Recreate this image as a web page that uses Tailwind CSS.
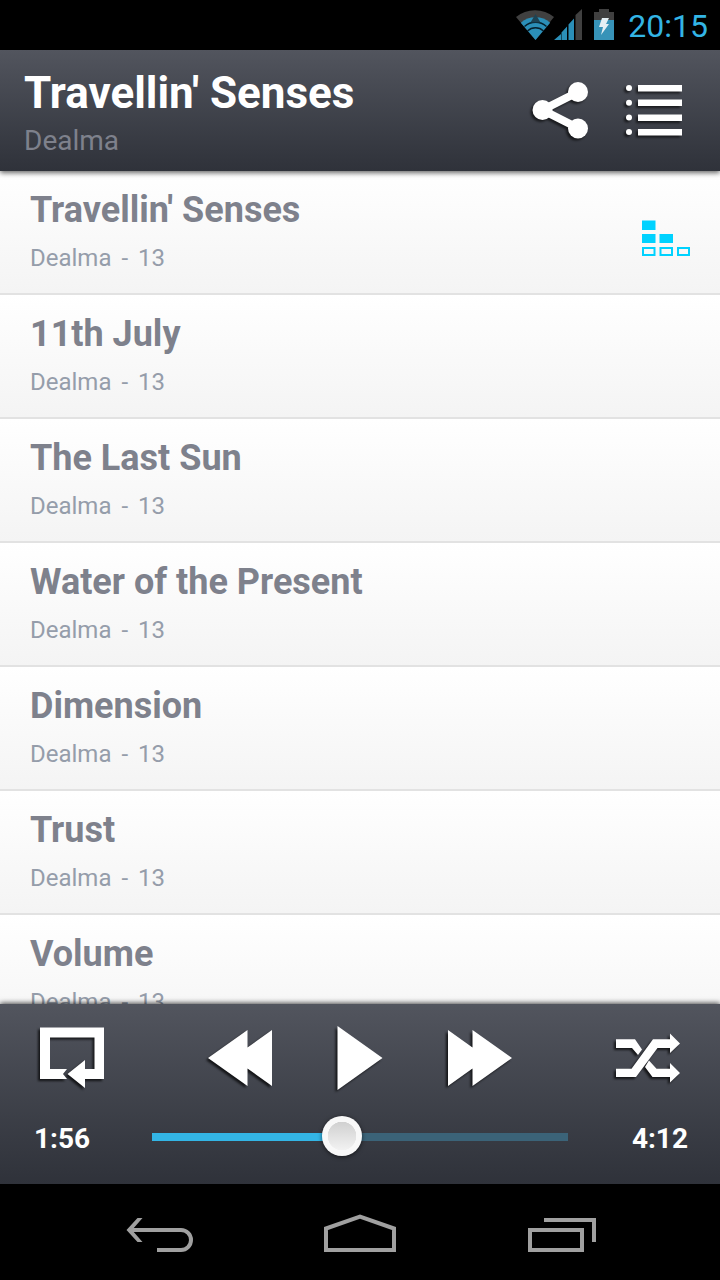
<!DOCTYPE html>
<html lang="en">
<head>
    <meta charset="UTF-8">
    <meta name="viewport" content="width=device-width, initial-scale=1.0">
    <title>Travellin' Senses - Dealma</title>
    <script src="https://cdn.jsdelivr.net/npm/@tailwindcss/browser@4"></script>
</head>
<body class="flex h-screen flex-col overflow-hidden bg-black font-[Roboto,sans-serif]">

    <!-- Status bar -->
    <div class="flex h-[50px] shrink-0 items-center justify-end pr-3 text-[#33b5e5]">
        <svg class="h-8 w-10" viewBox="0 0 40 32" fill="none" aria-label="Wi-Fi">
            <path d="M2 8A30 30 0 0 1 40 8L21.500 31Z" fill="#404040"/>
            <path d="M6.800 13.700A22.700 22.700 0 0 1 36.200 13.700L21.500 31Z" fill="#2b8fb8"/>
            <path d="M10.500 17.500A16.500 16.500 0 0 1 32.500 17.500M13.500 22A11.500 11.500 0 0 1 29.500 22" stroke="#06202c" stroke-width="1.500"/>
            <path d="M21.500 5L26.500 13.500H16.500Z" fill="#1d4354"/>
        </svg>
        <svg class="h-8 w-7" viewBox="0 0 28 32" aria-label="Signal">
            <path d="M0 31L7 25V31ZM7.500 31V23.500L13 17.500V31ZM14.500 31V15.500L20 9.500V31Z" fill="#2b8fb8"/>
            <path d="M21.500 31V6L28 0V31Z" fill="#404040"/>
        </svg>
        <svg class="ml-2.5 h-8 w-6" viewBox="0 0 24 32" aria-label="Battery charging">
            <path d="M2 3H7V0H17V3H22V12H2Z" fill="#404040"/>
            <path d="M2 11H22V31H2Z" fill="#3793b8"/>
            <path d="M10 9H17L14 15H17L9 26L11 18H7Z" fill="#e4eff4"/>
        </svg>
        <span class="ml-3 pt-0.5 text-[32px] leading-none">20:15</span>
    </div>

    <!-- Header -->
    <header class="relative z-10 flex h-[121px] shrink-0 items-center justify-between bg-linear-to-b from-[#52555e] to-[#2f323a] pr-8 pl-6 shadow-[0_2px_5px_rgba(0,0,0,0.6)]">
        <div class="pt-2">
            <h1 class="text-[44px] leading-[52px] font-bold text-white">Travellin' Senses</h1>
            <p class="text-[28px] leading-[44px] text-[#7e818c]">Dealma</p>
        </div>
        <div class="flex gap-8">
            <button type="button" aria-label="Share">
                <svg class="size-16 drop-shadow-[-2px_2px_1px_rgba(0,0,0,0.6)]" viewBox="0 0 64 64" fill="#fff">
                    <path d="M50 13L14.500 31L50 49" fill="none" stroke="#fff" stroke-width="8"/>
                    <circle cx="14.500" cy="31" r="10"/>
                    <circle cx="50" cy="13" r="10"/>
                    <circle cx="50" cy="49.500" r="10"/>
                </svg>
            </button>
            <button type="button" aria-label="Playlist">
                <svg class="size-16 drop-shadow-[-2px_2px_1px_rgba(0,0,0,0.6)]" viewBox="0 0 64 64" fill="#fff">
                    <circle cx="5" cy="9" r="3"/><path d="M14 6H58V12.500H14Z"/>
                    <circle cx="5" cy="23.700" r="3"/><path d="M14 20.500H58V27H14Z"/>
                    <circle cx="5" cy="38.500" r="3"/><path d="M14 35.500H58V42H14Z"/>
                    <circle cx="5" cy="53" r="3"/><path d="M14 50H58V56.500H14Z"/>
                </svg>
            </button>
        </div>
    </header>

    <!-- Tracks -->
    <ul class="min-h-0 flex-1 overflow-hidden bg-white">
        <li class="flex h-[124px] justify-between border-b-2 border-[#e2e2e2] bg-linear-to-b from-white to-[#f4f4f4] px-[30px] pt-[17px]">
            <div>
                <h2 class="text-[36px] leading-[44px] font-bold text-[#7e818c]">Travellin' Senses</h2>
                <p class="mt-2 text-[24px] leading-[36px] text-[#959daa]">Dealma <span class="mx-1">-</span> 13</p>
            </div>
            <svg class="mt-[31px] h-10 w-12" viewBox="0 0 48 40" fill="#00d2ff" aria-label="Now playing">
                <path d="M0 1.500H13.500V11H0ZM0 15H13.500V24H0ZM17.500 15H31V24H17.500Z"/>
                <path d="M1 29H12.500V36H1ZM18.500 29H30V36H18.500ZM36 29H47V36H36Z" fill="none" stroke="#00d2ff" stroke-width="2"/>
            </svg>
        </li>
        <li class="h-[124px] border-b-2 border-[#e2e2e2] bg-linear-to-b from-white to-[#f4f4f4] px-[30px] pt-[17px]">
            <h2 class="text-[36px] leading-[44px] font-bold text-[#7e818c]">11th July</h2>
            <p class="mt-2 text-[24px] leading-[36px] text-[#959daa]">Dealma <span class="mx-1">-</span> 13</p>
        </li>
        <li class="h-[124px] border-b-2 border-[#e2e2e2] bg-linear-to-b from-white to-[#f4f4f4] px-[30px] pt-[17px]">
            <h2 class="text-[36px] leading-[44px] font-bold text-[#7e818c]">The Last Sun</h2>
            <p class="mt-2 text-[24px] leading-[36px] text-[#959daa]">Dealma <span class="mx-1">-</span> 13</p>
        </li>
        <li class="h-[124px] border-b-2 border-[#e2e2e2] bg-linear-to-b from-white to-[#f4f4f4] px-[30px] pt-[17px]">
            <h2 class="text-[36px] leading-[44px] font-bold text-[#7e818c]">Water of the Present</h2>
            <p class="mt-2 text-[24px] leading-[36px] text-[#959daa]">Dealma <span class="mx-1">-</span> 13</p>
        </li>
        <li class="h-[124px] border-b-2 border-[#e2e2e2] bg-linear-to-b from-white to-[#f4f4f4] px-[30px] pt-[17px]">
            <h2 class="text-[36px] leading-[44px] font-bold text-[#7e818c]">Dimension</h2>
            <p class="mt-2 text-[24px] leading-[36px] text-[#959daa]">Dealma <span class="mx-1">-</span> 13</p>
        </li>
        <li class="h-[124px] border-b-2 border-[#e2e2e2] bg-linear-to-b from-white to-[#f4f4f4] px-[30px] pt-[17px]">
            <h2 class="text-[36px] leading-[44px] font-bold text-[#7e818c]">Trust</h2>
            <p class="mt-2 text-[24px] leading-[36px] text-[#959daa]">Dealma <span class="mx-1">-</span> 13</p>
        </li>
        <li class="h-[124px] border-b-2 border-[#e2e2e2] bg-linear-to-b from-white to-[#f4f4f4] px-[30px] pt-[17px]">
            <h2 class="text-[36px] leading-[44px] font-bold text-[#7e818c]">Volume</h2>
            <p class="mt-2 text-[24px] leading-[36px] text-[#959daa]">Dealma <span class="mx-1">-</span> 13</p>
        </li>
    </ul>

    <!-- Player -->
    <footer class="relative z-10 h-[180px] shrink-0 bg-linear-to-b from-[#52555e] to-[#2f323a] pt-[22px] shadow-[0_-1px_5px_rgba(0,0,0,0.7)]">
        <div class="flex justify-between px-10">
            <button type="button" aria-label="Repeat">
                <svg class="size-16 overflow-visible drop-shadow-[-2px_2px_1px_rgba(0,0,0,0.7)]" viewBox="0 0 64 64" fill="#fff">
                    <path d="M0 1.500H64V53H45V62L27.500 48L45 34V43H54.500V11.500H10V43H27L23 48L27 53H0Z"/>
                </svg>
            </button>
            <div class="flex gap-14">
                <button type="button" aria-label="Previous">
                    <svg class="size-16 overflow-visible drop-shadow-[-2px_2px_1px_rgba(0,0,0,0.7)]" viewBox="0 0 64 64" fill="#fff">
                        <path d="M39.500 4V21.500L64 4V60L39.500 42.500V60L0 32Z"/>
                    </svg>
                </button>
                <button type="button" aria-label="Play">
                    <svg class="size-16 overflow-visible drop-shadow-[-2px_2px_1px_rgba(0,0,0,0.7)]" viewBox="0 0 64 64" fill="#fff">
                        <path d="M9.500 0L54.500 32L9.500 64Z"/>
                    </svg>
                </button>
                <button type="button" aria-label="Next">
                    <svg class="size-16 overflow-visible drop-shadow-[-2px_2px_1px_rgba(0,0,0,0.7)]" viewBox="0 0 64 64" fill="#fff">
                        <path d="M0 4L24.500 21.500V4L64 32L24.500 60V42.500L0 60Z"/>
                    </svg>
                </button>
            </div>
            <button type="button" aria-label="Shuffle">
                <svg class="size-16 overflow-visible drop-shadow-[-2px_2px_1px_rgba(0,0,0,0.7)]" viewBox="0 0 64 64" fill="#fff">
                    <path d="M0 13.300H19L26 23.500L22 29L16 22H0Z"/>
                    <path d="M0 42.700H15.500L37 13.300H54V7.500L64 17.500L54 27V22H41.500L20 51H0Z"/>
                    <path d="M33 34.500L40.500 42.700H54V37L64 47L54 56.500V51H36.500L29 41Z"/>
                </svg>
            </button>
        </div>
        <div class="mt-[23px] flex items-center pr-8 pl-[34px] text-white">
            <span class="w-[98px] pt-1.5 text-[28px] leading-10 font-bold">1:56</span>
            <input type="range" min="0" max="252" value="115" aria-label="Position in track"
                class="h-10 min-w-0 flex-1 appearance-none bg-[linear-gradient(to_right,#33b5e5_46%,#3b6378_46%)] bg-[length:calc(100%-40px)_8px] bg-[position:center_17px] bg-no-repeat [&::-webkit-slider-thumb]:size-10 [&::-webkit-slider-thumb]:appearance-none [&::-webkit-slider-thumb]:rounded-full [&::-webkit-slider-thumb]:bg-[radial-gradient(circle,transparent_14px,#f8f8f8_14.5px),linear-gradient(to_bottom,#d0d0d0_15%,#f2f2f2_85%)] [&::-webkit-slider-thumb]:shadow-[0_1px_4px_rgba(0,0,0,0.6)]">
            <span class="w-[100px] pt-1.5 text-right text-[28px] leading-10 font-bold">4:12</span>
        </div>
    </footer>

    <!-- Navigation bar -->
    <nav class="flex h-24 shrink-0 items-center justify-center gap-30">
        <button type="button" aria-label="Back">
            <svg class="h-12 w-20" viewBox="0 0 80 48" fill="none">
                <path d="M10 22H61A10 10 0 0 1 61 42H37" stroke="#a0a0a0" stroke-width="4"/>
                <path d="M6.500 22L17.500 10H22.500L12 22L22.500 34H17.500Z" fill="#a0a0a0"/>
            </svg>
        </button>
        <button type="button" aria-label="Home">
            <svg class="h-12 w-20" viewBox="0 0 80 48" fill="none">
                <path d="M6 42V20.500L40 8.500L74 20.500V42Z" stroke="#a0a0a0" stroke-width="4"/>
            </svg>
        </button>
        <button type="button" aria-label="Recent apps">
            <svg class="h-12 w-20" viewBox="0 0 80 48" fill="none" stroke="#a0a0a0" stroke-width="4">
                <path d="M10 22H62V42H10ZM24 12H74V34"/>
            </svg>
        </button>
    </nav>

</body>
</html>
